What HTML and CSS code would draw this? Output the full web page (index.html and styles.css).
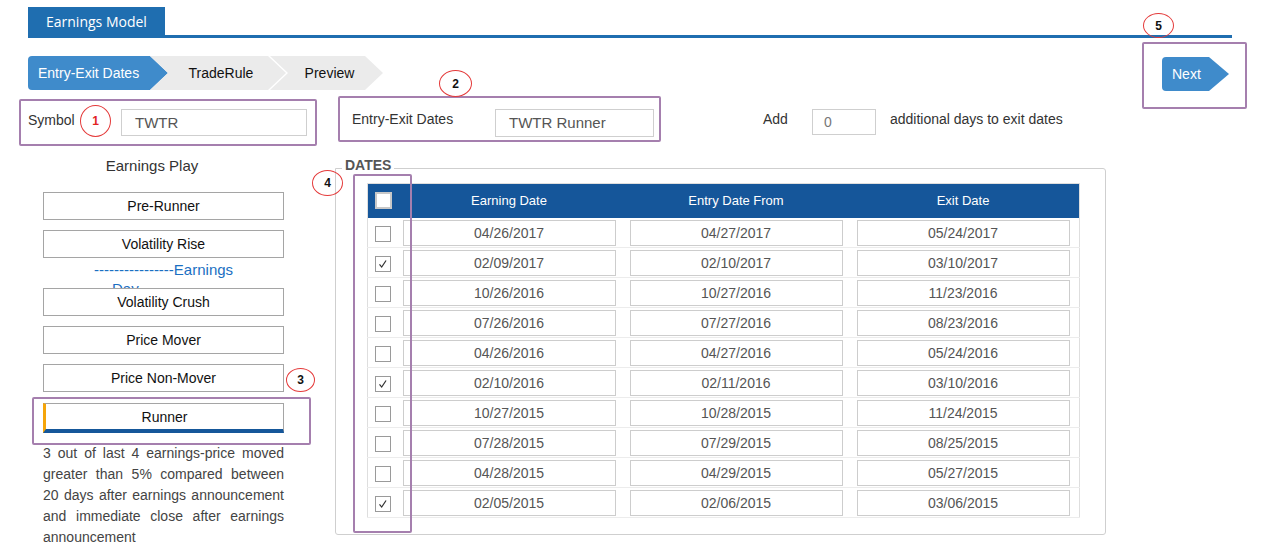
FILE: index.html
```html
<!DOCTYPE html>
<html>
<head>
<meta charset="utf-8">
<link rel="stylesheet" href="styles.css">
</head>
<body>
<div class="page">
  <div class="header"><span class="tab">Earnings Model</span></div>

  <div class="stepper-row">
    <div class="stepper">
      <div class="step step-active">Entry-Exit Dates</div>
      <div class="step step-next">TradeRule</div>
      <div class="step step-next step-last">Preview</div>
    </div>
    <div class="next-btn">Next</div>
  </div>

  <div class="form-row">
    <div class="field-box symbol-box">
      <span class="field-label">Symbol</span>
      <div class="text-input symbol-input">TWTR</div>
    </div>
    <div class="field-box entry-box">
      <span class="field-label">Entry-Exit Dates</span>
      <div class="text-input entry-input">TWTR Runner</div>
    </div>
    <div class="add-group">
      <span class="field-label">Add</span>
      <div class="text-input add-input">0</div>
      <span class="field-label add-text">additional days to exit dates</span>
    </div>
  </div>

  <div class="content-row">
    <div class="left-col">
      <div class="play-title">Earnings Play</div>
      <div class="play-btn first">Pre-Runner</div>
      <div class="play-btn">Volatility Rise</div>
      <div class="earnings-day">
        <div class="ed-line1">----------------Earnings</div>
        <div class="ed-line2">Day</div>
      </div>
      <div class="play-btn flush">Volatility Crush</div>
      <div class="play-btn">Price Mover</div>
      <div class="play-btn">Price Non-Mover</div>
      <div class="play-btn selected">Runner</div>
      <p class="play-desc">3 out of last 4 earnings-price moved greater than 5% compared between 20 days after earnings announcement and immediate close after earnings announcement</p>
    </div>

    <div class="dates-box">
      <div class="dates-legend">DATES</div>
      <table class="dates-table">
        <colgroup><col class="c-chk"><col class="c-date"><col class="c-date"><col class="c-last"></colgroup>
        <thead>
          <tr>
            <th><span class="chk chk-head"></span></th>
            <th><span class="th-label">Earning Date</span></th>
            <th><span class="th-label">Entry Date From</span></th>
            <th><span class="th-label">Exit Date</span></th>
          </tr>
        </thead>
        <tbody>
          <tr><td><span class="chk"></span></td><td><div class="date-input">04/26/2017</div></td><td><div class="date-input">04/27/2017</div></td><td><div class="date-input">05/24/2017</div></td></tr>
          <tr><td><span class="chk"><svg viewBox="0 0 16 16" width="14" height="14"><polyline points="4,8.5 6.5,11.5 11.5,4" fill="none" stroke="#333" stroke-width="1.4"/></svg></span></td><td><div class="date-input">02/09/2017</div></td><td><div class="date-input">02/10/2017</div></td><td><div class="date-input">03/10/2017</div></td></tr>
          <tr><td><span class="chk"></span></td><td><div class="date-input">10/26/2016</div></td><td><div class="date-input">10/27/2016</div></td><td><div class="date-input">11/23/2016</div></td></tr>
          <tr><td><span class="chk"></span></td><td><div class="date-input">07/26/2016</div></td><td><div class="date-input">07/27/2016</div></td><td><div class="date-input">08/23/2016</div></td></tr>
          <tr><td><span class="chk"></span></td><td><div class="date-input">04/26/2016</div></td><td><div class="date-input">04/27/2016</div></td><td><div class="date-input">05/24/2016</div></td></tr>
          <tr><td><span class="chk"><svg viewBox="0 0 16 16" width="14" height="14"><polyline points="4,8.5 6.5,11.5 11.5,4" fill="none" stroke="#333" stroke-width="1.4"/></svg></span></td><td><div class="date-input">02/10/2016</div></td><td><div class="date-input">02/11/2016</div></td><td><div class="date-input">03/10/2016</div></td></tr>
          <tr><td><span class="chk"></span></td><td><div class="date-input">10/27/2015</div></td><td><div class="date-input">10/28/2015</div></td><td><div class="date-input">11/24/2015</div></td></tr>
          <tr><td><span class="chk"></span></td><td><div class="date-input">07/28/2015</div></td><td><div class="date-input">07/29/2015</div></td><td><div class="date-input">08/25/2015</div></td></tr>
          <tr><td><span class="chk"></span></td><td><div class="date-input">04/28/2015</div></td><td><div class="date-input">04/29/2015</div></td><td><div class="date-input">05/27/2015</div></td></tr>
          <tr><td><span class="chk"><svg viewBox="0 0 16 16" width="14" height="14"><polyline points="4,8.5 6.5,11.5 11.5,4" fill="none" stroke="#333" stroke-width="1.4"/></svg></span></td><td><div class="date-input">02/05/2015</div></td><td><div class="date-input">02/06/2015</div></td><td><div class="date-input">03/06/2015</div></td></tr>
        </tbody>
      </table>
    </div>
  </div>

  <!-- annotation overlays -->
  <div class="note-circle n1 red-num">1</div>
  <div class="note-circle n2">2</div>
  <div class="note-circle n3">3</div>
  <div class="note-circle n4">4</div>
  <div class="note-circle n5">5</div>
  <div class="note-box b3"></div>
  <div class="note-box b4"></div>
  <div class="note-box b5"></div>
</div>
</body>
</html>
```

FILE: styles.css
```css
* { box-sizing: border-box; }

body {
  margin: 0;
  font-family: "Liberation Sans", Arial, sans-serif;
  font-size: 14px;
  color: #333;
  background: #fff;
}

.page {
  position: relative;
  width: 1266px;
  height: 552px;
  overflow: hidden;
  padding-top: 7px;
}

/* header tab */
.header {
  margin-left: 28px;
  width: 1204px;
  border-bottom: 3px solid #1f6eb0;
  height: 31px;
}
.tab {
  display: inline-block;
  height: 28px;
  line-height: 30px;
  padding: 0 18px;
  background: #1f6eb0;
  color: #fff;
  font-family: "Open Sans", "Liberation Sans", sans-serif;
  font-size: 14px;
}

/* stepper */
.stepper-row {
  display: flex;
  justify-content: space-between;
  align-items: flex-start;
  margin-top: 18px;
  padding-left: 28px;
  padding-right: 37px;
  height: 34px;
}
.stepper { display: flex; }
.step {
  height: 34px;
  line-height: 34px;
  font-size: 14px;
  color: #111;
  text-align: center;
  clip-path: polygon(0 0, calc(100% - 18px) 0, 100% 50%, calc(100% - 18px) 100%, 0 100%);
}
.step-active {
  width: 140px;
  background: #3f8bcb;
  color: #fff;
  border-radius: 4px 0 0 4px;
  text-align: left;
  padding-left: 10px;
}
.step-next {
  width: 136px;
  margin-left: -18px;
  background: #ebebeb;
  padding: 0 12px 0 18px;
  clip-path: polygon(0 0, calc(100% - 18px) 0, 100% 50%, calc(100% - 18px) 100%, 0 100%, 18px 50%);
}
.step-last {
  width: 113px;
  margin-left: -16px;
  padding: 0 12px 0 18px;
}

.next-btn {
  margin-top: 1px;
  width: 67px;
  height: 34px;
  line-height: 34px;
  padding-left: 10px;
  background: #3f8bcb;
  color: #fff;
  font-size: 14px;
  border-radius: 4px 0 0 4px;
  clip-path: polygon(0 0, 47px 0, 100% 50%, 47px 100%, 0 100%);
}

/* form row */
.form-row {
  display: flex;
  align-items: flex-start;
  height: 56px;
}
.field-box {
  border: 2px solid #a57fae;
  border-radius: 2px;
  display: flex;
  align-items: flex-start;
}
.field-label {
  font-size: 14px;
  color: #333;
  line-height: 16px;
}
.text-input {
  border: 1px solid #cfcfcf;
  height: 27px;
  line-height: 25px;
  font-size: 15px;
  color: #555;
  padding-left: 13px;
  background: #fff;
}
.symbol-box {
  margin-left: 19px;
  margin-top: 9px;
  width: 298px;
  height: 47px;
  padding: 8px 0 0 7px;
}
.symbol-box .field-label { margin-top: 3px; width: 93px; }
.symbol-input { width: 186px; }

.entry-box {
  margin-left: 21px;
  margin-top: 6px;
  width: 323px;
  height: 46px;
  padding: 11px 0 0 12px;
}
.entry-box .field-label { margin-top: 2px; width: 143px; }
.entry-input { width: 159px; height: 28px; line-height: 26px; }

.add-group {
  display: flex;
  align-items: flex-start;
  margin-left: 102px;
  margin-top: 19px;
}
.add-group .field-label { margin-top: 2px; }
.add-input {
  margin-left: 24px;
  width: 64px;
  height: 26px;
  line-height: 24px;
  padding-left: 11px;
  font-size: 14px;
  color: #777;
}
.add-text { margin-left: 14px; }

/* content */
.content-row {
  display: flex;
  align-items: flex-start;
}
.left-col {
  margin-left: 43px;
  width: 241px;
}
.play-title {
  margin-top: 10px;
  height: 20px;
  line-height: 20px;
  font-size: 15px;
  color: #333;
  text-align: center;
  padding-right: 23px;
}
.play-btn {
  position: relative;
  z-index: 1;
  margin-top: 10px;
  height: 28px;
  line-height: 26px;
  border: 1px solid #a5a5a5;
  background: #fff;
  text-align: center;
  font-size: 14px;
  color: #111;
}
.play-btn.first { margin-top: 16px; }
.play-btn.flush { margin-top: 0; }
.play-btn.selected {
  margin-top: 11px;
  height: 30px;
  border-left: 3px solid #f5a50a;
  border-bottom: 4px solid #15579a;
  line-height: 26px;
}
.earnings-day {
  height: 30px;
  color: #1b6fc2;
  font-size: 15px;
  line-height: 19px;
}
.ed-line1 { padding-top: 2px; text-align: center; }
.ed-line2 {
  padding-left: 69px;
  height: 9px;
  overflow: hidden;
}

.play-desc {
  margin: 10px 0 0;
  font-size: 14px;
  line-height: 21px;
  color: #444;
  text-align: justify;
}

/* dates box */
.dates-box {
  margin-left: 51px;
  margin-top: 22px;
  width: 771px;
  border: 1px solid #cfcfcf;
  border-radius: 0 3px 3px 3px;
  padding: 0 26px 16px 31px;
}
.dates-legend {
  width: max-content;
  margin: -11px 0 0 -25px;
  padding: 0 3px;
  background: #fff;
  font-size: 14px;
  font-weight: bold;
  line-height: 14px;
  color: #555;
}
.dates-table {
  margin-top: 11px;
  width: 712px;
  table-layout: fixed;
  border-collapse: collapse;
  border: 1px solid #dedede;
}
.c-chk { width: 33px; }
.c-date { width: 227px; }
.c-last { width: 225px; }

.dates-table thead tr {
  height: 34px;
  background: #15569a;
}
.dates-table th {
  padding: 0;
  font-weight: normal;
  color: #fff;
  font-size: 13px;
  text-align: left;
}
.th-label {
  display: block;
  width: 213px;
  margin-left: 2px;
  text-align: center;
}
.dates-table tbody tr {
  height: 30px;
  border-bottom: 1px solid #ececec;
}
.dates-table td {
  padding: 0;
    vertical-align: top;
}
.chk {
  display: flex;
  align-items: center;
  justify-content: center;
  width: 16px;
  height: 16px;
  margin: 8px 0 0 7px;
  border: 1px solid #9a9a9a;
  background: #fff;
}
.chk-head {
  margin-top: 0;
  border: 2px solid #c8c8c8;
  width: 17px;
  height: 17px;
}
.dates-table th .chk { margin-left: 7px; }
.date-input {
  margin: 2px 0 0 2px;
  width: 213px;
  height: 26px;
  line-height: 24px;
  border: 1px solid #cdcdcd;
  text-align: center;
  font-size: 14px;
  color: #555;
}

/* annotations */
.note-circle {
  position: absolute;
  z-index: 5;
  border: 1px solid #e43a3a;
  border-radius: 50%;
  display: flex;
  align-items: center;
  justify-content: center;
  font-size: 12px;
  font-weight: bold;
  color: #111;
}
.red-num { color: #e2231f; }
.n1 { left: 80px; top: 105px; width: 31px; height: 32px; }
.n2 { left: 439px; top: 70px; width: 33px; height: 27px; }
.n3 { left: 286px; top: 368px; width: 29px; height: 24px; }
.n4 { left: 312px; top: 170px; width: 31px; height: 26px; }
.n5 { left: 1143px; top: 13px; width: 31px; height: 25px; }

.note-box {
  position: absolute;
  z-index: 4;
  border: 2px solid #a57fae;
  border-radius: 2px;
}
.b3 { left: 32px; top: 397px; width: 279px; height: 48px; }
.b4 { left: 353px; top: 174px; width: 59px; height: 359px; }
.b5 { left: 1142px; top: 42px; width: 105px; height: 67px; }
```
